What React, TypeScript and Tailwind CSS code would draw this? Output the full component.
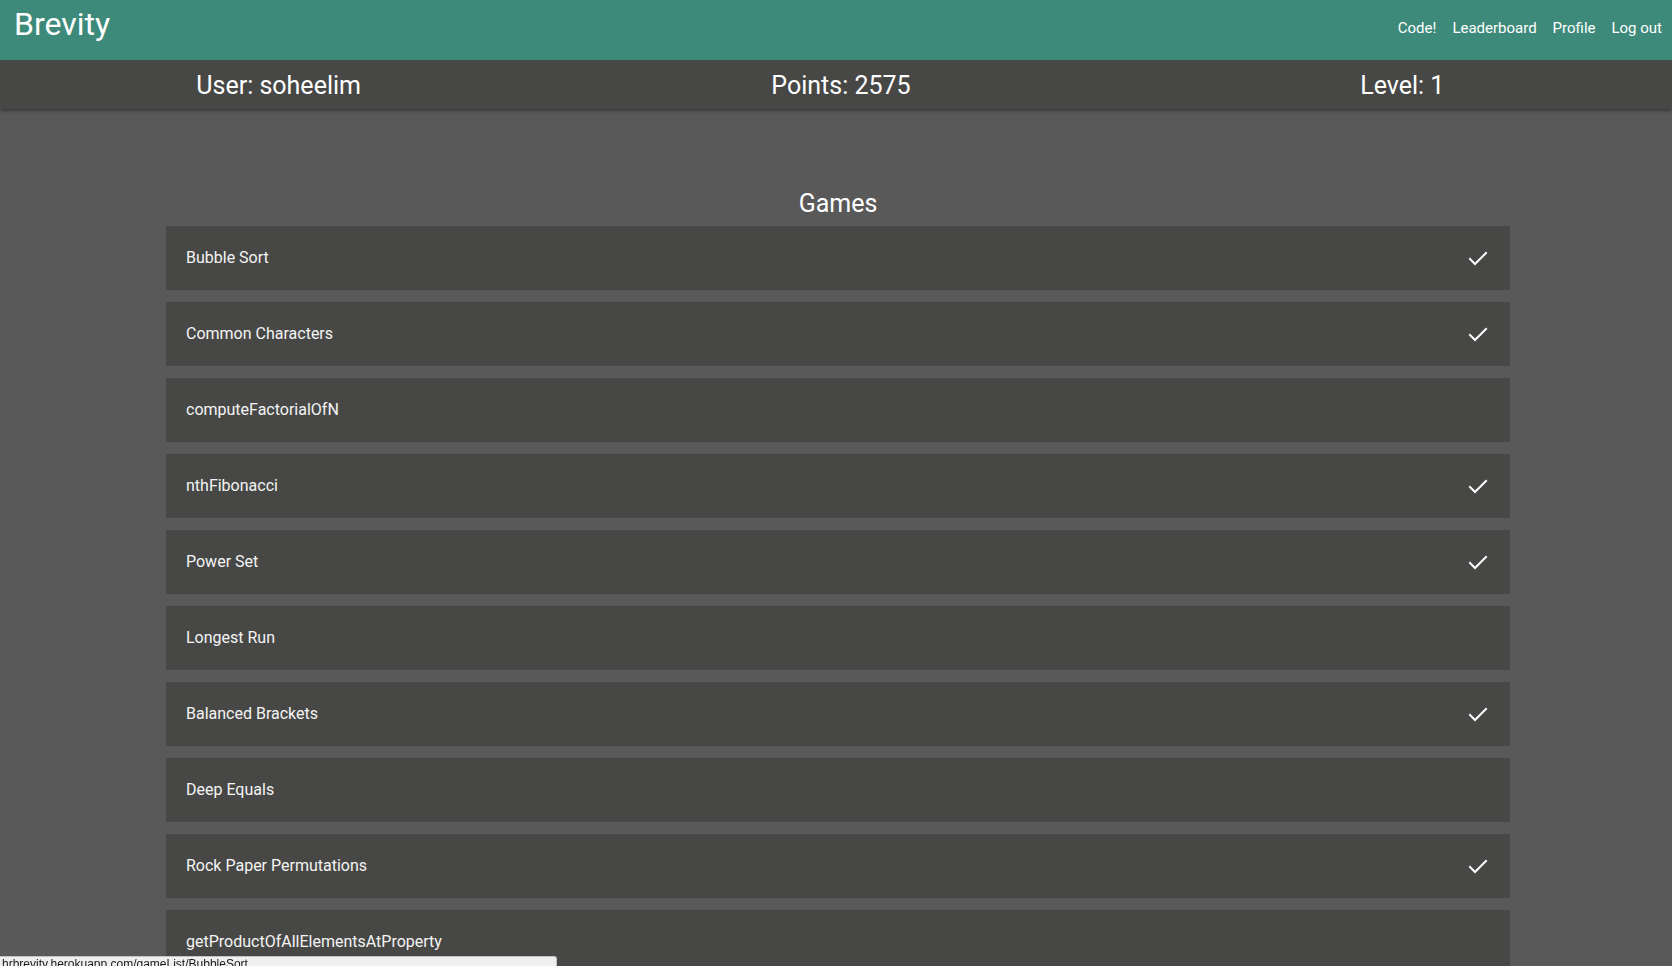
import React from 'react';

const GAMES = [
  { name: 'Bubble Sort', done: true },
  { name: 'Common Characters', done: true },
  { name: 'computeFactorialOfN', done: false },
  { name: 'nthFibonacci', done: true },
  { name: 'Power Set', done: true },
  { name: 'Longest Run', done: false },
  { name: 'Balanced Brackets', done: true },
  { name: 'Deep Equals', done: false },
  { name: 'Rock Paper Permutations', done: true },
  { name: 'getProductOfAllElementsAtProperty', done: false },
  { name: 'Array Pair Sum', done: false },
];

const Check = () => (
  <svg width="20" height="15" viewBox="0 0 20 15" fill="none" stroke="white" strokeWidth="2" strokeLinecap="square">
    <polyline points="2,8 7,13 18,2" />
  </svg>
);

export default function App() {
  return (
    <div className="min-h-screen bg-[#595959] text-white font-['Roboto','Liberation_Sans',sans-serif]">
      {/* top nav */}
      <header className="h-[60px] bg-[#3d8a7a] flex items-start justify-between pl-[14px] pr-[10px]">
        <div className="text-[32px] leading-[48px] text-white">Brevity</div>
        <nav className="flex items-center gap-[16px] h-[56px] text-[15px] text-white">
          <a>Code!</a>
          <a>Leaderboard</a>
          <a>Profile</a>
          <a>Log out</a>
        </nav>
      </header>

      {/* stats bar */}
      <div className="h-[49px] bg-[#474846] grid grid-cols-3 items-center text-[25px] pt-[2px] shadow-[0_2px_3px_rgba(0,0,0,0.35)] relative">
        <div className="text-center">User: soheelim</div>
        <div className="text-center pl-[10px]">Points: 2575</div>
        <div className="text-center pl-[18px]">Level: 1</div>
      </div>

      <main className="pt-[78px] pb-10">
        <h2 className="text-[25px] leading-[33px] text-center mb-[6px] pl-[4px]">Games</h2>
        <ul className="w-[1344px] flex flex-col gap-[12px] ml-[166px]">
          {GAMES.map((g) => (
            <li key={g.name} className="h-[64px] bg-[#474846] flex items-center justify-between pl-[20px] pr-[22px] text-[16px] text-[#f4f4f4]">
              <span>{g.name}</span>
              {g.done && <Check />}
            </li>
          ))}
        </ul>
      </main>

      {/* browser status url */}
      <div className="fixed left-0 bottom-0 w-[557px] h-[10px] bg-[#efefef] border-t border-r border-[#c4c4c4] rounded-tr-[3px] overflow-hidden">
        <div className="text-[12px] leading-[16px] -mt-[1px] pl-[2px] text-[#1a1a1a] font-['Liberation_Sans',sans-serif] whitespace-nowrap">
          hrbrevity.herokuapp.com/gameList/BubbleSort
        </div>
      </div>
    </div>
  );
}
